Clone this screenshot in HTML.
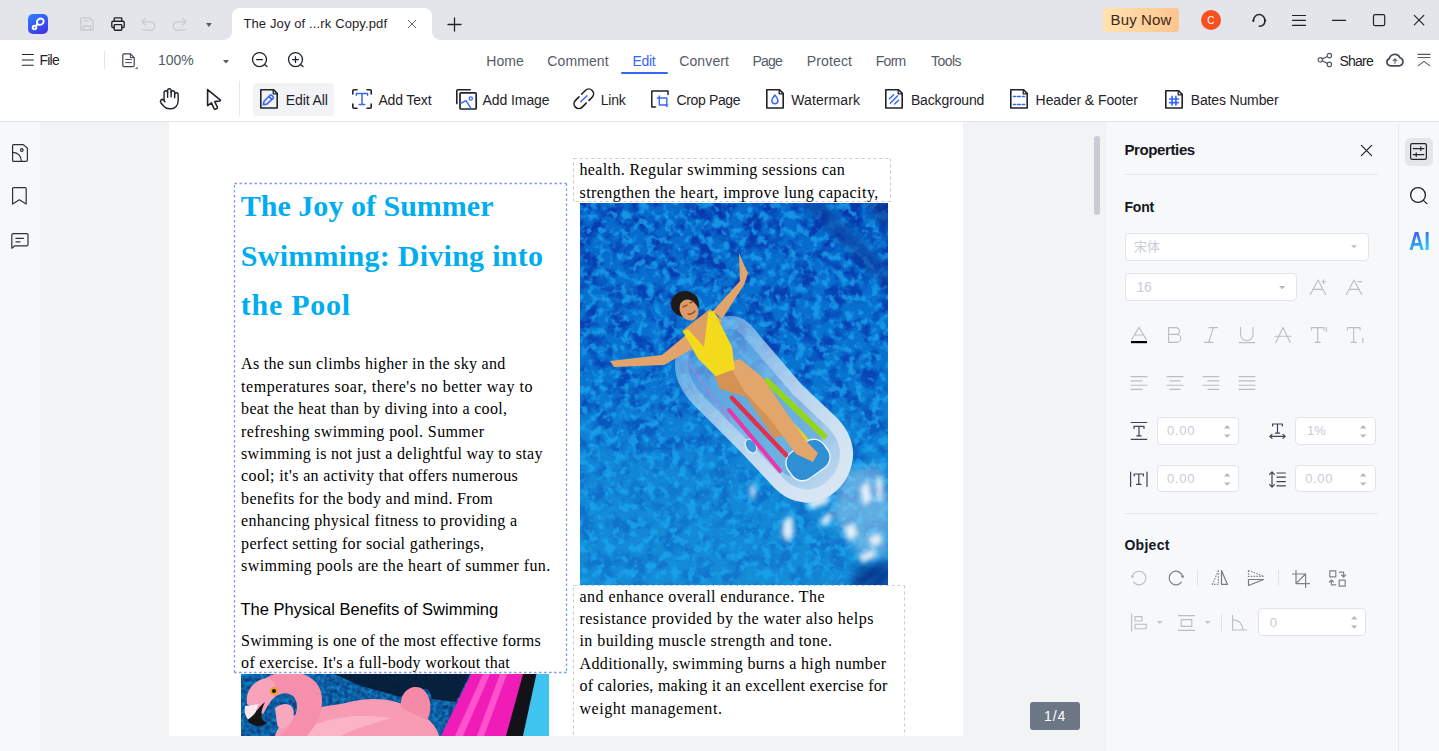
<!DOCTYPE html>
<html lang="en">
<head>
<meta charset="utf-8">
<title>The Joy of Summer Work Copy.pdf</title>
<style>
*{box-sizing:border-box;margin:0;padding:0}
html,body{width:1439px;height:751px;overflow:hidden;background:#f2f3f5}
body{position:relative;font-family:"Liberation Sans","Noto Sans CJK SC",sans-serif;color:#1f2329;font-size:14px}
.t{position:absolute;white-space:pre;line-height:20px;height:20px;z-index:5}
svg{position:absolute;overflow:visible;z-index:4}
.box{position:absolute}
.k{fill:none;stroke:#1f2329;stroke-width:1.4;stroke-linecap:round;stroke-linejoin:round}
.b{fill:none;stroke:#3a66f5;stroke-width:1.4;stroke-linecap:round;stroke-linejoin:round}
.g{fill:none;stroke:#c6c9d0;stroke-width:1.3;stroke-linecap:round;stroke-linejoin:round}
.m{fill:none;stroke:#8a8f99;stroke-width:1.2;stroke-linecap:round;stroke-linejoin:round}
.inp{position:absolute;background:#fff;border:1px solid #e2e4e9;border-radius:4px}
#titlebar{position:absolute;left:0;top:0;width:1439px;height:40px;background:#e4e5eb}
#tab{position:absolute;left:232px;top:8px;width:200px;height:32px;background:#fff;border-radius:8px 8px 0 0}
#menubar{position:absolute;left:0;top:40px;width:1439px;height:40px;background:#fff}
#toolbar{position:absolute;left:0;top:80px;width:1439px;height:42px;background:#fff;border-bottom:1px solid #e3e5e9}
#leftbar{position:absolute;left:0;top:122px;width:41px;height:629px;background:#f7f8fa;border-right:1px solid #eeeff1}
#main{position:absolute;left:40px;top:122px;width:1065px;height:629px;background:#f2f3f5}
#page{position:absolute;left:169px;top:122px;width:794px;height:613.5px;background:#fff;overflow:hidden}
#props{position:absolute;left:1105px;top:122px;width:294px;height:629px;background:#f7f8fa;border-right:1px solid #ecedf0;border-left:1px solid #ecedf0}
#rstrip{position:absolute;left:1399px;top:122px;width:40px;height:629px;background:#f7f8fa}
</style>
</head>
<body>
<div id="titlebar"><div id="tab"></div></div>
<div id="menubar"></div>
<div id="toolbar"></div>
<div id="leftbar"></div>
<div id="main"></div>
<div id="page">
<svg style="left:65px;top:61px" width="333" height="490" viewBox="0 0 333 490"><path d="M.5 .5H332.5M332.5 .5V489.5M332.5 489.5H.5M.5 489.5V.5" fill="none" stroke="#7a96f7" stroke-width="1.3" stroke-dasharray="2.4 2.6"/></svg>
<svg style="left:404px;top:36px" width="318" height="44" viewBox="0 0 318 44"><path d="M.5 .5H317.5M317.5 .5V43.5M317.5 43.5H.5M.5 43.5V.5" fill="none" stroke="#cbcbcb" stroke-width="1" stroke-dasharray="3 3"/></svg>
<svg style="left:404px;top:463px" width="332" height="156" viewBox="0 0 332 156"><path d="M.5 .5H331.5M331.5 .5V155.5M.5 155.5V.5" fill="none" stroke="#cbcbcb" stroke-width="1" stroke-dasharray="3 3"/></svg>
<svg style="left:411px;top:81px" width="308" height="382" viewBox="0 0 308 382">
<defs>
<filter id="w1" color-interpolation-filters="sRGB" x="0" y="0" width="100%" height="100%"><feTurbulence type="fractalNoise" baseFrequency="0.06" numOctaves="3" seed="7"/><feColorMatrix values="0 0 0 0 0.03  0 0 0 0 0.22  0 0 0 0 0.68  4.5 0 0 0 -2"/></filter>
<filter id="w2" color-interpolation-filters="sRGB" x="0" y="0" width="100%" height="100%"><feTurbulence type="fractalNoise" baseFrequency="0.12" numOctaves="3" seed="23"/><feColorMatrix values="0 0 0 0 0.1  0 0 0 0 0.64  0 0 0 0 0.93  0 4.5 0 0 -2.15"/></filter>
<linearGradient id="wg" x1="0" y1="0" x2="0" y2="1"><stop offset="0" stop-color="#0768cc"/><stop offset=".45" stop-color="#0973d0"/><stop offset=".7" stop-color="#1286d6"/><stop offset="1" stop-color="#158cd6"/></linearGradient>
<linearGradient id="mg" x1="0" y1="0" x2="0" y2="1"><stop offset="0" stop-color="#fff" stop-opacity=".75"/><stop offset=".4" stop-color="#fff" stop-opacity=".75"/><stop offset=".75" stop-color="#fff" stop-opacity=".85"/></linearGradient>
<mask id="mk"><rect width="308" height="382" fill="url(#mg)"/></mask>
<linearGradient id="dg" x1="0" y1="0" x2="0" y2="1"><stop offset="0" stop-color="#fff" stop-opacity="1"/><stop offset=".45" stop-color="#fff" stop-opacity=".75"/><stop offset=".7" stop-color="#fff" stop-opacity=".3"/><stop offset="1" stop-color="#fff" stop-opacity=".25"/></linearGradient>
<mask id="dk"><rect width="308" height="382" fill="url(#dg)"/></mask>
<linearGradient id="fl" gradientUnits="userSpaceOnUse" x1="110" y1="130" x2="260" y2="290"><stop offset="0" stop-color="#6eb4ea" stop-opacity=".55"/><stop offset=".5" stop-color="#9ec8ec" stop-opacity=".75"/><stop offset="1" stop-color="#cfe0f0" stop-opacity=".95"/></linearGradient>
<linearGradient id="rg" gradientUnits="userSpaceOnUse" x1="120" y1="140" x2="250" y2="290"><stop offset="0" stop-color="#fff" stop-opacity=".15"/><stop offset=".45" stop-color="#fff" stop-opacity=".55"/><stop offset="1" stop-color="#fff" stop-opacity="1"/></linearGradient>
<mask id="rm"><rect width="308" height="382" fill="url(#rg)"/></mask>
<clipPath id="pc"><rect width="308" height="382"/></clipPath>
<clipPath id="fc2"><path d="M150 113C163 112 172 122 180 133L222 182L258 216C272 232 278 250 268 272C258 292 238 302 222 299C208 297 200 291 190 280L160 248L112 200C100 186 92 170 96 152C102 130 128 113 150 113Z"/></clipPath>
<filter id="bl"><feGaussianBlur stdDeviation="4"/></filter>
<filter id="bs"><feGaussianBlur stdDeviation="2.6"/></filter><filter id="b1"><feGaussianBlur stdDeviation="1"/></filter>
</defs>
<g clip-path="url(#pc)">
<rect width="308" height="382" fill="url(#wg)"/>
<g mask="url(#dk)"><rect width="308" height="382" filter="url(#w1)"/></g>
<g mask="url(#mk)"><rect width="308" height="382" filter="url(#w2)"/></g>
<!-- darker lane lines / corners -->
<g filter="url(#bl)" opacity=".6"><path d="M214 -5L312 92L312 66L240 -5Z" fill="#0a3a9c"/><path d="M280 -5H312V36Z" fill="#0a2f8a"/><path d="M276 364L312 356V388H270Z" fill="#04156e"/></g>
<!-- sun glints -->
<path d="M262 268L300 262L312 300L306 356L276 348L252 312Z" fill="#dbeaf6" opacity=".38" filter="url(#bl)"/>
<g filter="url(#bs)" fill="#f4f8fb" opacity=".9"><path d="M226 300L238 294L250 292L248 300L232 306Z"/><path d="M240 318L250 308L252 316L244 324Z"/><path d="M203 318L212 312L214 330L208 340L202 332Z"/><path d="M264 324L274 320L278 332L268 338Z"/><path d="M280 286L288 276L292 296L284 304Z"/><path d="M296 278L302 272L302 296L298 300Z"/><path d="M288 334L300 330L302 340L292 344Z"/><path d="M278 352L294 346L296 354L282 360Z"/><path d="M170 284L175 280L175 294L171 296Z"/></g>
<!-- float -->
<path d="M150 113C163 112 172 122 180 133L222 182L258 216C272 232 278 250 268 272C258 292 238 302 222 299C208 297 200 291 190 280L160 248L112 200C100 186 92 170 96 152C102 130 128 113 150 113Z" fill="url(#fl)"/>
<g clip-path="url(#fc2)"><g mask="url(#rm)"><path d="M150 113C163 112 172 122 180 133L222 182L258 216C272 232 278 250 268 272C258 292 238 302 222 299C208 297 200 291 190 280L160 248L112 200C100 186 92 170 96 152C102 130 128 113 150 113Z" fill="none" stroke="#d8e6f3" stroke-width="26"/></g>
<path d="M140 150L180 170L236 226L250 252L232 276L206 272L180 246L128 190Z" fill="#5fa9df" opacity=".75"/>
</g>
<rect x="206" y="241" width="44" height="32" rx="13" transform="rotate(-36 228 257)" fill="#2f8fd4" stroke="#f0f6fc" stroke-width="1.3"/>
<ellipse cx="171" cy="243" rx="5" ry="7.5" transform="rotate(-30 171 243)" fill="#3c98da" stroke="#e6f0fa" stroke-width="1.2"/>
<path d="M108 160L150 218" stroke="#a080e0" stroke-width="3" stroke-linecap="round" opacity=".5"/>
<path d="M149 207L200 268" stroke="#e838a8" stroke-width="4" stroke-linecap="round"/>
<path d="M152 195L206 252" stroke="#e0304c" stroke-width="4.5" stroke-linecap="round"/>
<path d="M187 178L244 233" stroke="#92d420" stroke-width="6" stroke-linecap="round"/>
<path d="M213 222L226 236" stroke="#ecd420" stroke-width="4" stroke-linecap="round"/>
<!-- legs -->
<path d="M134 172L150 163L178 174L186 190L200 222L206 232L194 235L180 214L166 194L140 186Z" fill="#d49254"/>
<path d="M148 160L160 156L182 174L226 238L238 250L233 259L216 251L190 216L164 188Z" fill="#e3a66a"/>
<!-- arms -->
<path d="M133 108L160 78L159 50L165 64L168 70L164 82L142 116Z" fill="#e2a46a"/>
<path d="M106 132L82 152L30 158L34 164L84 162L112 146Z" fill="#e2a46a"/>
<!-- torso / neck skin -->
<path d="M102 128L130 106L142 118L124 144Z" fill="#dd9e63"/>
<!-- swimsuit -->
<path d="M102.8 128.6L108 126L124 144L128.3 108.7L134 108L143 126L152 144L154.7 166L135.7 173.2L118 155.6Z" fill="#f3da1d"/>
<!-- head -->
<ellipse cx="105" cy="101" rx="14" ry="13" fill="#1d1a1c"/>
<ellipse cx="109" cy="107" rx="9" ry="11" transform="rotate(-28 109 107)" fill="#dc9a66"/>
<path d="M103 104L107 102M110 100L114 98M108 111Q112 112 115 108" stroke="#7a3b2a" stroke-width="1.2" fill="none" stroke-linecap="round"/>
</g></svg>
<svg style="left:72px;top:551.7px" width="308" height="62" viewBox="0 0 308 62">
<defs><clipPath id="fc"><rect width="308" height="62"/></clipPath>
<filter id="w3" color-interpolation-filters="sRGB" x="0" y="0" width="100%" height="100%"><feTurbulence type="fractalNoise" baseFrequency="0.25" numOctaves="2" seed="5"/><feColorMatrix values="0 0 0 0 0.05  0.5 0 0 0 0.12  0.55 0 0 0 0.36  0 0 0 0 1"/></filter></defs>
<g clip-path="url(#fc)">
<rect width="308" height="62" fill="#155f9e"/>
<rect width="308" height="62" filter="url(#w3)"/>
<path d="M93 0H229L215 28L191 25L188 16L173 13L160 23L120 12Z" fill="#071b34" opacity=".92"/>
<!-- magenta mat -->
<path d="M230 0H283L266 62H200Z" fill="#f01cb8"/>
<path d="M242 0H249L222 62H214ZM259 0H266L243 62H236Z" fill="#ff62d2" opacity=".8"/>
<path d="M282 0H295.500L282 62H265Z" fill="#121218"/>
<path d="M295.500 0H308V62H282Z" fill="#3fc4f0"/>
<!-- flamingo body -->
<path d="M34 62C40 40 70 34 100 30C130 22 150 24 170 34C186 42 196 52 198 62Z" fill="#f79cb4"/>
<path d="M60 62C70 46 110 38 150 44C130 50 110 56 100 62Z" fill="#fbb9c9" opacity=".8"/>
<path d="M160 34C158 18 170 10 180 14C190 20 192 36 186 46Z" fill="#f58aa6"/>
<!-- neck arch -->
<path d="M22 6C40 -8 74 -4 80 18C84 36 76 50 66 62H40C56 46 60 30 52 22C44 16 34 20 28 30Z" fill="#f58fab"/>
<!-- head / beak -->
<path d="M6 30C4 18 12 6 26 4C36 6 38 18 30 26L22 40Z" fill="#f7a3b9"/>
<path d="M4 32C2 42 8 50 20 52C14 44 14 36 18 30Z" fill="#fbe9ee"/>
<path d="M6 46C12 54 22 54 26 48C20 48 18 40 24 28C16 34 14 42 6 46Z" fill="#151316"/>
<circle cx="33" cy="17" r="4" fill="#e8a21c"/><circle cx="33" cy="17" r="2" fill="#1a1410"/>
<path d="M34 34C44 26 56 30 52 44C46 56 38 58 36 50Z" fill="#f7a8bd"/>
</g></svg>
</div>
<div id="props"></div>
<div id="rstrip"></div>
<svg style="left:28px;top:14px" width="20" height="20" viewBox="0 0 20 20"><defs><linearGradient id="lg" x1="0" y1="0" x2="0.6" y2="1"><stop offset="0" stop-color="#2b83ff"/><stop offset="1" stop-color="#4038e6"/></linearGradient></defs><rect width="20" height="20" rx="5" fill="url(#lg)"/><g fill="none" stroke="#fff" stroke-width="1.9" stroke-linecap="round"><ellipse cx="12.3" cy="7.7" rx="3.5" ry="3" transform="rotate(-30 12.3 7.7)"/><circle cx="6.5" cy="13.6" r="1.8"/><path d="M9.5 9.8Q8.5 11 7.9 12.3"/></g></svg>
<svg style="left:80px;top:17px" width="14" height="14" viewBox="0 0 14 14" ><path class="g" d="M1.5 .8H9.5L13.2 4.5V13.2H.8V1.5Q.8 .8 1.5 .8Z"/><path class="g" d="M3.5 13V9H10.5V13M4 3.8H8"/></svg>
<svg style="left:111px;top:17px" width="14" height="14" viewBox="0 0 14 14" ><path class="k" style="stroke-width:1.35" d="M3.2 4.2V1.6Q3.2 .8 4 .8H10Q10.8 .8 10.8 1.6V4.2M3.2 10.5H2Q.8 10.5 .8 9.3V5.4Q.8 4.2 2 4.2H12Q13.2 4.2 13.2 5.4V9.3Q13.2 10.5 12 10.5H10.8"/><rect class="k" style="stroke-width:1.35" x="3.2" y="7.6" width="7.6" height="5.6" rx=".8"/></svg>
<svg style="left:141px;top:17px" width="15" height="14" viewBox="0 0 15 14" ><path class="g" d="M4.5 1.5L1 4.8L4.5 8M1.2 4.8H9.5A4.2 4.2 0 0 1 9.5 13.2H2"/></svg>
<svg style="left:172px;top:17px" width="15" height="14" viewBox="0 0 15 14" ><path class="g" d="M10.5 1.5L14 4.8L10.5 8M13.8 4.8H5.5A4.2 4.2 0 0 0 5.5 13.2H13"/></svg>
<svg style="left:206px;top:22.8px" width="6" height="4" viewBox="0 0 6 4" ><path d="M0 0H5.8L2.9 4Z" fill="#555b66"/></svg>
<div class="box" style="left:224px;top:32px;width:8px;height:8px;background:radial-gradient(circle at 0 0,transparent 7.5px,#fff 8px)"></div>
<div class="box" style="left:432px;top:32px;width:8px;height:8px;background:radial-gradient(circle at 100% 0,transparent 7.5px,#fff 8px)"></div>
<svg style="left:408px;top:20px" width="8" height="8" viewBox="0 0 8 8" ><path class="k" style="stroke-width:.9;stroke:#4a4f59" d="M.2 .2L7.8 7.8M7.8 .2L.2 7.8"/></svg>
<svg style="left:448px;top:17.5px" width="13" height="13" viewBox="0 0 13 13" ><path class="k" style="stroke-width:1.3" d="M6.5 0V13M0 6.5H13"/></svg>
<div class="box" style="left:1103px;top:8px;width:76px;height:24px;border-radius:4px;background:linear-gradient(90deg,#ffe3b1,#ffc48e)"></div>
<div class="box" style="left:1200.8px;top:9.8px;width:20.4px;height:20.4px;border-radius:50%;background:#f4511e"></div>
<svg style="left:1251px;top:13px" width="16" height="15" viewBox="0 0 16 15" ><path class="k" style="stroke-width:1.5" d="M2.6 8.2V7.2A5.6 5.6 0 0 1 13.8 7.2V8.4Q13.8 12.6 8.4 13.3"/><path d="M2.9 5.6L.9 7.6L2.9 9.6ZM13.5 5.6L15.5 7.6L13.5 9.6Z" fill="#1f2329"/></svg>
<svg style="left:1292px;top:15px" width="14" height="11" viewBox="0 0 14 11" ><path class="k" style="stroke-width:1.2" d="M.5 .5H13.5M.5 5.3H13.5M.5 10.4H13.5"/></svg>
<svg style="left:1332px;top:20px" width="14" height="1" viewBox="0 0 14 1" ><path class="k" style="stroke-width:1.2" d="M.5 .3H13.7"/></svg>
<svg style="left:1373px;top:14px" width="12" height="12" viewBox="0 0 12 12" ><rect class="k" style="stroke-width:1.2" x=".5" y=".6" width="11.2" height="11" rx="1.6"/></svg>
<svg style="left:1414px;top:15px" width="10" height="10" viewBox="0 0 10 10" ><path class="k" style="stroke-width:1.2" d="M.3 .3L9.8 9.8M9.8 .3L.3 9.8"/></svg>
<svg style="left:22px;top:54px" width="12" height="12" viewBox="0 0 12 12" ><path class="k" style="stroke-width:1.05" d="M.3 .4H11.3M.3 5.9H11.3M.3 11.2H11.3"/></svg>
<div class="box" style="left:104px;top:51px;width:1px;height:18px;background:#e2e4e8"></div>
<svg style="left:121.5px;top:53px" width="16" height="17" viewBox="0 0 16 17" ><path class="k" style="stroke-width:1.2;stroke:#3d434e" d="M.8 2Q.8 .8 2 .8H8.4L12.2 4.6V12.4Q12.2 13.6 11 13.6H2Q.8 13.6 .8 12.4Z"/><path class="k" style="stroke-width:1;stroke:#3d434e" d="M3.6 6.4H9.4M3.6 9.6H9.4M8.4 1V4.6H12"/><path d="M15.6 13.4V16H13Z" fill="#555b66"/></svg>
<svg style="left:223px;top:60px" width="6" height="4" viewBox="0 0 6 4" ><path d="M0 0H6L3 3.6Z" fill="#555b66"/></svg>
<svg style="left:251px;top:52px" width="18" height="16" viewBox="0 0 18 16" ><circle class="k" style="stroke-width:1.3" cx="8.5" cy="7.6" r="7"/><path class="k" style="stroke-width:1.3" d="M5.6 7.6H11.4M13.6 12.6L16 14.6"/></svg>
<svg style="left:287px;top:52px" width="18" height="16" viewBox="0 0 18 16" ><circle class="k" style="stroke-width:1.3" cx="8.5" cy="7.6" r="7"/><path class="k" style="stroke-width:1.3" d="M5.6 7.6H11.4M8.5 4.7V10.5M13.6 12.6L16 14.6"/></svg>
<div class="box" style="left:621px;top:72px;width:47px;height:2px;background:#3a66f5;border-radius:1px"></div>
<svg style="left:1317px;top:53px" width="15" height="14" viewBox="0 0 15 14" ><g class="k" style="stroke:#555b66;stroke-width:1.2"><circle cx="3.3" cy="6.8" r="2.2"/><circle cx="12.4" cy="2.6" r="2.2"/><circle cx="12.4" cy="11.4" r="2.2"/><path d="M5.3 5.9L10.4 3.5M5.3 7.8L10.4 10.4"/></g></svg>
<svg style="left:1386px;top:53px" width="18" height="14" viewBox="0 0 18 14" ><path class="k" style="stroke:#454c5a;stroke-width:1.7" d="M4.6 12.8A3.7 3.7 0 0 1 3.4 5.6A5.6 5.6 0 0 1 14 4.8A4.1 4.1 0 0 1 13.4 12.8Z"/><path class="k" style="stroke:#555b66;stroke-width:1.1" d="M9 10.2V6M7.2 7.7L9 5.9L10.8 7.7"/></svg>
<svg style="left:1418px;top:54px" width="12" height="12" viewBox="0 0 12 12" ><path class="k" style="stroke:#555b66;stroke-width:1.1" d="M0 .4H12M0 3.5H12M.3 11.6L6 7.4L11.7 11.6"/></svg>
<svg style="left:160px;top:88px" width="19" height="21" viewBox="0 0 19 21" ><g class="k" style="stroke-width:1.6" transform="translate(-1.2,-1.2) scale(.88,1)"><path d="M18 11V6a2 2 0 0 0-2-2a2 2 0 0 0-2 2"/><path d="M14 10V4a2 2 0 0 0-2-2a2 2 0 0 0-2 2v2"/><path d="M10 10.5V6a2 2 0 0 0-2-2a2 2 0 0 0-2 2v8"/><path d="M18 8a2 2 0 1 1 4 0v6a8 8 0 0 1-8 8h-2c-2.8 0-4.5-.860-5.99-2.34l-3.6-3.6a2 2 0 0 1 2.83-2.82L7 15"/></g></svg>
<svg style="left:206px;top:88px" width="16" height="23" viewBox="0 0 16 23" ><path class="k" style="stroke-width:1.6" d="M1.6 1.6V17.6L5.4 14.8L8.1 20.6Q8.6 21.6 9.6 21.1L10.9 20.5Q11.8 20 11.3 19L8.7 13.6L13.8 13Q14.9 12.7 14.1 11.9Z"/></svg>
<div class="box" style="left:239px;top:81px;width:1px;height:35px;background:#e6e7eb"></div>
<div class="box" style="left:253px;top:83px;width:81px;height:33px;background:#f2f3f5;border-radius:4px"></div>
<svg style="left:260px;top:89px" width="18" height="20" viewBox="0 0 18 20" ><path class="k" style="stroke-width:1.6" d="M.8 0.8H13.6L17.2 4.4V19H.8Z"/><path class="k" style="stroke-width:1.3" d="M13.2 1.0V4.8H17"/><path class="b" style="stroke-width:1.6" d="M3.3 15.7L4.1 12.2L10 6.3Q10.8 5.5 11.6 6.3L13.1 7.8Q13.9 8.6 13.1 9.4L6.8 15.1ZM9 7.6L11.8 10.4"/></svg>
<svg style="left:352px;top:89px" width="20" height="20" viewBox="0 0 20 20" ><path class="k" style="stroke-width:1.6" d="M.8 5V2Q.8 .8 2 .8H5M15 .8H18Q19.2 .8 19.2 2V5M19.2 15V18Q19.2 19.2 18 19.2H15M5 19.2H2Q.8 19.2 .8 18V15"/><path class="b" style="stroke-width:1.5" d="M4.4 6.2V4.6H15.6V6.2M10 4.6V15.4M7.2 15.6H12.8"/></svg>
<svg style="left:456px;top:89px" width="21" height="21" viewBox="0 0 21 21" ><path class="k" style="stroke-width:1.6" d="M.8 14.6V2Q.8 .8 2 .8H14.2"/><rect class="k" style="stroke-width:1.7" x="4" y="3.8" width="16.2" height="16.2" rx="1"/><path class="b" style="stroke-width:1.4" d="M4.6 14.4L10 11.6L14.8 19.2"/><circle class="b" style="stroke-width:1.3" cx="14.8" cy="9.5" r="1.6"/></svg>
<svg style="left:573px;top:88px" width="22" height="22" viewBox="0 0 22 22" ><g transform="translate(10.8,10.8) rotate(-45)"><path class="k" style="stroke-width:1.6" d="M1.6 -4.8H7A4.8 4.8 0 0 1 7 4.8H2.6M-2 -4.8H-7A4.8 4.8 0 0 0 -7 4.8H-1.4"/><path class="b" style="stroke-width:1.5" d="M-4.2 0H4.4"/></g></svg>
<svg style="left:651px;top:90px" width="18" height="18" viewBox="0 0 18 18" ><path class="k" style="stroke-width:1.5" d="M4.5 16.9H.8V1H17V4.6"/><path class="b" style="stroke-width:1.4" d="M8.3 6V15H16M6.4 8H15.8V16"/><path d="M15.8 17.6L14 15H17.6ZM17.6 15L15 13.2V16.8Z" fill="#3a66f5"/></svg>
<svg style="left:766px;top:89px" width="18" height="20" viewBox="0 0 18 20" ><path class="k" style="stroke-width:1.6" d="M.8 0.8H13.6L17.2 4.4V19H.8Z"/><path class="k" style="stroke-width:1.3" d="M13.2 1.0V4.8H17"/><path class="b" style="stroke-width:1.5" d="M8.9 6Q11.9 9.8 11.9 11.7A3 3 0 0 1 5.9 11.7Q5.9 9.8 8.9 6Z"/></svg>
<svg style="left:885px;top:89px" width="18" height="20" viewBox="0 0 18 20" ><path class="k" style="stroke-width:1.6" d="M.8 0.8H13.6L17.2 4.4V19H.8Z"/><path class="k" style="stroke-width:1.3" d="M13.2 1.0V4.8H17"/><path class="b" style="stroke-width:1.5" d="M4.4 9.8L8.6 5.8M5.3 14.2L12.6 6.8M9.6 15L13.6 11.2"/></svg>
<svg style="left:1010px;top:89px" width="18" height="20" viewBox="0 0 18 20" ><path class="k" style="stroke-width:1.6" d="M.8 0.8H13.6L17.2 4.4V19H.8Z"/><path class="k" style="stroke-width:1.3" d="M13.2 1.0V4.8H17"/><path class="b" style="stroke-width:1.5" d="M3.4 7.5H5.5M7.4 7.5H10.5M12.4 7.5H14.6M3.4 15.5H5.5M7.4 15.5H10.5M12.4 15.5H14.6"/></svg>
<svg style="left:1165px;top:89px" width="18" height="20" viewBox="0 0 18 20" ><path class="k" style="stroke-width:1.6" d="M.8 1.8H13.6L17.2 5.4V19H.8Z"/><path class="k" style="stroke-width:1.3" d="M13.2 2.0V5.8H17"/><path class="b" style="stroke-width:1.7" d="M4.6 10H13.4M4.6 13.6H13.4M7.1 7.4V16M10.9 7.4V16"/></svg>
<svg style="left:12px;top:144px" width="16" height="18" viewBox="0 0 16 18" ><path class="k" style="stroke-width:1.2;stroke:#2b303a" d="M1.6 .6H11.4L15.4 4.2V16Q15.4 17.4 14 17.4H1.6Q.6 17.4 .6 16V1.6Q.6 .6 1.6 .6Z"/><circle class="k" style="stroke-width:1.2;stroke:#2b303a" cx="9.8" cy="6" r="1.3"/><path class="k" style="stroke-width:1.2;stroke:#2b303a" d="M.8 8.4Q9 9 9.4 17.2"/></svg>
<svg style="left:12px;top:187px" width="15" height="18" viewBox="0 0 15 18" ><path class="k" style="stroke-width:1.2;stroke:#2b303a" d="M1.6 .6H13.2Q14.2 .6 14.2 1.6V17L7.4 12.8L.6 17V1.6Q.6 .6 1.6 .6Z"/></svg>
<svg style="left:11px;top:233px" width="18" height="16" viewBox="0 0 18 16" ><path class="k" style="stroke-width:1.2;stroke:#2b303a" d="M2.4 .6H15.6Q17 .6 17 2V11.4Q17 12.8 15.6 12.8H4L.8 15.2V2Q.8 .6 2.4 .6Z"/><path class="k" style="stroke-width:1.2;stroke:#2b303a" d="M5 5.4H12.4M5 8.8H9"/></svg>
<div class="box" style="left:1094px;top:135.5px;width:6px;height:79px;background:#c9ccd3;border-radius:3px"></div>
<div class="box" style="left:1030px;top:702px;width:50px;height:28px;background:#6c7684;border-radius:3px"></div>
<div class="box" style="left:1405px;top:138px;width:28px;height:28px;background:#e4e6ea;border-radius:5px"></div>
<svg style="left:1410px;top:143px" width="17" height="17" viewBox="0 0 17 17" ><rect class="k" style="stroke-width:1.2" x=".6" y=".6" width="15.8" height="15.8" rx="1.6"/><path class="k" style="stroke-width:1.2" d="M3.2 5.6H13.8M3.2 11.6H13.8M10.8 3.8V7.4M6.2 9.8V13.4"/></svg>
<svg style="left:1410px;top:187px" width="18" height="18" viewBox="0 0 18 18" ><circle class="k" style="stroke-width:1.3" cx="8" cy="8" r="7.4"/><path class="k" style="stroke-width:1.3" d="M13.4 13.4L16.8 16.6"/></svg>
<div class="t" style="left:1409px;top:227px;height:28px;line-height:28px;font-size:25px;font-weight:700;transform:scaleX(.84);transform-origin:0 0;background:linear-gradient(160deg,#3f63f6 25%,#23d0f0 80%);-webkit-background-clip:text;background-clip:text;color:transparent">AI</div>
<svg style="left:1360.5px;top:144.5px" width="11" height="11" viewBox="0 0 11 11" ><path class="k" style="stroke-width:1.2" d="M.4 .4L10.6 10.6M10.6 .4L.4 10.6"/></svg>
<div class="box" style="left:1125px;top:174px;width:253px;height:1px;background:#e4e6ea"></div>
<div class="inp" style="left:1125px;top:233px;width:244px;height:28px"></div>
<svg style="left:1351px;top:245.2px" width="6" height="4" viewBox="0 0 6 4" ><path d="M0 0H6L3 3.4Z" fill="#c3c7cf"/></svg>
<div class="inp" style="left:1125px;top:273px;width:172px;height:28px"></div>
<svg style="left:1278.6px;top:286.3px" width="7" height="4" viewBox="0 0 7 4" ><path d="M0 0H6.4L3.2 3.2Z" fill="#b4b8c0"/></svg>
<svg style="left:1310px;top:279px" width="17" height="16" viewBox="0 0 17 16" ><path class="g" style="stroke:#b9bdc6;stroke-width:1.1" d="M.4 15.6L8 1L15.6 15.6M3.4 10.4H12.6M11.6 2.8H15.6M13.6 .8V4.8"/></svg>
<svg style="left:1346px;top:279px" width="17" height="16" viewBox="0 0 17 16" ><path class="g" style="stroke:#b9bdc6;stroke-width:1.1" d="M.4 15.6L8 1L15.6 15.6M3.4 10.4H12.6M11.8 2.6H15.8"/></svg>
<svg style="left:1131px;top:327px" width="16" height="17" viewBox="0 0 16 17" ><path class="g" style="stroke:#b9bdc6;stroke-width:1.1" d="M.8 12.4L8 .4L15.2 12.4M3.6 8H12.4"/><rect x="0" y="14" width="16" height="2.2" fill="#000"/></svg>
<svg style="left:1168px;top:327px" width="14" height="16" viewBox="0 0 14 16" ><path class="g" style="stroke:#b9bdc6;stroke-width:1.1" d="M.6 .6V15.4H8.8A4 4 0 0 0 8.8 7.4H.6M8 7.4A3.4 3.4 0 0 0 8 .6H.6"/></svg>
<svg style="left:1204px;top:327px" width="14" height="16" viewBox="0 0 14 16" ><path class="g" style="stroke:#b9bdc6;stroke-width:1.1" d="M5 .6H13.4M.6 15.4H9M9.4 .6L4.6 15.4"/></svg>
<svg style="left:1239px;top:327px" width="16" height="16" viewBox="0 0 16 16" ><path class="g" style="stroke:#b9bdc6;stroke-width:1.1" d="M1.6 .4V7.6A6.2 6.2 0 0 0 14 7.6V.4M.2 15.6H15.6"/></svg>
<svg style="left:1275px;top:327px" width="16" height="16" viewBox="0 0 16 16" ><path class="g" style="stroke:#b9bdc6;stroke-width:1.1" d="M.8 15.4L8 .4L15.2 15.4M0 9.2H16"/></svg>
<svg style="left:1311px;top:327px" width="17" height="16" viewBox="0 0 17 16" ><path class="g" style="stroke:#b9bdc6;stroke-width:1.1" d="M.4 3V.6H13V3M6.7 .6V15.4M4 15.4H9.4M15.4 .4V4.4"/></svg>
<svg style="left:1346.5px;top:327px" width="17" height="16" viewBox="0 0 17 16" ><path class="g" style="stroke:#b9bdc6;stroke-width:1.1" d="M.4 3V.6H13V3M6.7 .6V15.4M4 15.4H9.4M15.8 11.4V15.8"/></svg>
<svg style="left:1131px;top:376px" width="16" height="14" viewBox="0 0 16 14" ><path class="g" style="stroke:#b9bdc6;stroke-width:1.1" d="M0 .6H16M0 4.9H11M0 9.2H16M0 13.4H11"/></svg>
<svg style="left:1167px;top:376px" width="16" height="14" viewBox="0 0 16 14" ><path class="g" style="stroke:#b9bdc6;stroke-width:1.1" d="M0 .6H16M3 4.9H13M0 9.2H16M3 13.4H13"/></svg>
<svg style="left:1203px;top:376px" width="16" height="14" viewBox="0 0 16 14" ><path class="g" style="stroke:#b9bdc6;stroke-width:1.1" d="M0 .6H16M5 4.9H16M0 9.2H16M5 13.4H16"/></svg>
<svg style="left:1239px;top:376px" width="16" height="14" viewBox="0 0 16 14" ><path class="g" style="stroke:#b9bdc6;stroke-width:1.1" d="M0 .6H16M0 4.9H16M0 9.2H16M0 13.4H16"/></svg>
<div class="inp" style="left:1157.4px;top:417.4px;width:82px;height:27.2px"></div>
<svg style="left:1223.9px;top:424.79999999999995px" width="7" height="13" viewBox="0 0 7 13" ><path d="M0 3.4L3.2 0L6.4 3.4ZM0 9.4L3.2 12.8L6.4 9.4Z" fill="#b4b8c0"/></svg>
<div class="inp" style="left:1295px;top:417.4px;width:80.6px;height:27.2px"></div>
<svg style="left:1360.1px;top:424.79999999999995px" width="7" height="13" viewBox="0 0 7 13" ><path d="M0 3.4L3.2 0L6.4 3.4ZM0 9.4L3.2 12.8L6.4 9.4Z" fill="#b4b8c0"/></svg>
<div class="inp" style="left:1157.4px;top:465.3px;width:82px;height:27.2px"></div>
<svg style="left:1223.9px;top:472.7px" width="7" height="13" viewBox="0 0 7 13" ><path d="M0 3.4L3.2 0L6.4 3.4ZM0 9.4L3.2 12.8L6.4 9.4Z" fill="#b4b8c0"/></svg>
<div class="inp" style="left:1295px;top:465.3px;width:80.6px;height:27.2px"></div>
<svg style="left:1360.1px;top:472.7px" width="7" height="13" viewBox="0 0 7 13" ><path d="M0 3.4L3.2 0L6.4 3.4ZM0 9.4L3.2 12.8L6.4 9.4Z" fill="#b4b8c0"/></svg>
<div class="inp" style="left:1258.4px;top:608.4px;width:108px;height:27.2px"></div>
<svg style="left:1350.9px;top:615.8px" width="7" height="13" viewBox="0 0 7 13" ><path d="M0 3.4L3.2 0L6.4 3.4ZM0 9.4L3.2 12.8L6.4 9.4Z" fill="#b4b8c0"/></svg>
<svg style="left:1131px;top:422px" width="16" height="18" viewBox="0 0 16 18" ><path class="k" style="stroke:#3d4350;stroke-width:1.2" d="M.2 .5H15.8M.2 17.3H15.8M3 6.4V4.4H13V6.4M8 4.4V13.6M5.8 13.8H10.2"/></svg>
<svg style="left:1269px;top:423px" width="17" height="16" viewBox="0 0 17 16" ><path class="k" style="stroke:#3d4350;stroke-width:1.2" d="M3.6 3V1H13.4V3M8.5 1V10M6.4 10.2H10.6M1 13.4H16M3 11.4L.8 13.4L3 15.4M14 11.4L16.2 13.4L14 15.4"/></svg>
<svg style="left:1130px;top:471.5px" width="18" height="15" viewBox="0 0 18 15" ><path class="k" style="stroke:#3d4350;stroke-width:1.2" d="M.6 0V14.4M17 0V14.4M4.2 4V2H13.4V4M8.8 2V12.2M6.6 12.4H11"/></svg>
<svg style="left:1269px;top:470.5px" width="17" height="17" viewBox="0 0 17 17" ><path class="k" style="stroke:#3d4350;stroke-width:1.2" d="M3 1V16M.6 3.4L3 .8L5.4 3.4M.6 13.6L3 16.2L5.4 13.6M8 2H16.4M8 6.2H16.4M8 10.6H16.4M8 14.8H16.4"/></svg>
<div class="box" style="left:1125px;top:513px;width:253px;height:1px;background:#e4e6ea"></div>
<svg style="left:1131px;top:570px" width="16" height="16" viewBox="0 0 16 16" ><path class="g" style="stroke:#b9bdc6;stroke-width:1.1" d="M1.4 6.4A6.8 6.8 0 1 1 2.600 12.200"/><path d="M3.2 6L-.3 5.600L1.1 8.400Z" fill="#b9bdc6"/></svg>
<svg style="left:1167.5px;top:570px" width="16" height="16" viewBox="0 0 16 16" ><path class="m" style="stroke:#7d828c;stroke-width:1.2" d="M14.6 6.4A6.8 6.8 0 1 0 13.400 12.200"/><path d="M12.8 6L16.300 5.600L14.900 8.400Z" fill="#7d828c"/></svg>
<div class="box" style="left:1197px;top:570px;width:1px;height:16px;background:#dfe1e6"></div>
<svg style="left:1212px;top:570px" width="16" height="15" viewBox="0 0 16 15" ><path fill="none" stroke="#777c86" stroke-width="1.1" stroke-dasharray="1.5 1.3" d="M6.4 .4L.4 14.4H6.4Z"/><path fill="none" stroke="#777c86" stroke-width="1.2" stroke-linejoin="round" d="M9.5 .6V14.4H15.5Z"/></svg>
<svg style="left:1248px;top:570px" width="16" height="16" viewBox="0 0 16 16" ><path fill="none" stroke="#777c86" stroke-width="1.1" stroke-dasharray="1.5 1.3" d="M.4 .4V6.4H15.8Z"/><path fill="none" stroke="#777c86" stroke-width="1.2" stroke-linejoin="round" d="M.5 9.5H15.6L.5 15.5Z"/></svg>
<div class="box" style="left:1278px;top:570px;width:1px;height:16px;background:#dfe1e6"></div>
<svg style="left:1292px;top:569.5px" width="18" height="18" viewBox="0 0 18 18" ><path class="m" style="stroke:#7d828c;stroke-width:1.2" d="M4 .4V13.6H17.4M.4 4H13.6V17.4M13.6 4L4.4 13.2"/></svg>
<svg style="left:1329px;top:570px" width="17" height="17" viewBox="0 0 17 17" ><path class="m" style="stroke:#7d828c;stroke-width:1.2" d="M.8 .8H6.8V6.8H.8ZM10.2 10.2H16.2V16.2H10.2ZM10.2 2.2H14.6V7M12.6 5L14.6 7.2L16.6 5M6.8 14.8H2.4V10M.4 12L2.4 9.8L4.4 12"/></svg>
<svg style="left:1131px;top:614px" width="16" height="17" viewBox="0 0 16 17" ><path class="g" style="stroke:#b9bdc6;stroke-width:1.1" d="M.6 0V17M4 2.6H11V7H4ZM4 10.2H15.2V14.8H4Z"/></svg>
<svg style="left:1156.5px;top:621.3px" width="6" height="4" viewBox="0 0 6 4" ><path d="M0 0H5.6L2.8 3.2Z" fill="#c3c7cf"/></svg>
<svg style="left:1178px;top:614.5px" width="17" height="16" viewBox="0 0 17 16" ><path class="g" style="stroke:#b9bdc6;stroke-width:1.1" d="M.4 .6H16.6M.4 15.4H16.6M3.2 4.6H13.8V11.4H3.2Z"/></svg>
<svg style="left:1204.5px;top:621.3px" width="6" height="4" viewBox="0 0 6 4" ><path d="M0 0H5.6L2.8 3.2Z" fill="#c3c7cf"/></svg>
<div class="box" style="left:1221px;top:614px;width:1px;height:17px;background:#dfe1e6"></div>
<svg style="left:1231px;top:614.5px" width="16" height="16" viewBox="0 0 16 16" ><path class="g" style="stroke:#b9bdc6;stroke-width:1.1" style="stroke:#9a9fa9;stroke-width:1.1" d="M1.6 .4V15H15.6M1.6 4.6Q11.2 5.2 12 15"/></svg>
<div class="t" style="left:243.4px;top:14.4px;font-size:13px;color:#1f2329;letter-spacing:0.127px">The Joy of ...rk Copy.pdf</div>
<div class="t" style="left:1110.5px;top:10.1px;font-size:15px;color:#3b2a18;letter-spacing:0.145px">Buy Now</div>
<div class="t" style="left:1207.3px;top:10.5px;font-size:10px;color:#fff">C</div>
<div class="t" style="left:39.5px;top:50.4px;font-size:14px;color:#1f2329;letter-spacing:-0.787px">File</div>
<div class="t" style="left:158.0px;top:50.4px;font-size:14px;color:#555b66">100%</div>
<div class="t" style="left:486.2px;top:50.6px;font-size:14px;color:#555b66;letter-spacing:0.114px">Home</div>
<div class="t" style="left:547.3px;top:50.6px;font-size:14px;color:#555b66;letter-spacing:0.102px">Comment</div>
<div class="t" style="left:679.2px;top:50.6px;font-size:14px;color:#555b66;letter-spacing:0.128px">Convert</div>
<div class="t" style="left:752.5px;top:50.6px;font-size:14px;color:#555b66;letter-spacing:-0.801px">Page</div>
<div class="t" style="left:806.7px;top:50.6px;font-size:14px;color:#555b66;letter-spacing:0.157px">Protect</div>
<div class="t" style="left:875.7px;top:50.6px;font-size:14px;color:#555b66;letter-spacing:-0.691px">Form</div>
<div class="t" style="left:931.0px;top:50.6px;font-size:14px;color:#555b66;letter-spacing:-0.522px">Tools</div>
<div class="t" style="left:632.6px;top:50.6px;font-size:14px;color:#3a66f5;letter-spacing:-0.375px">Edit</div>
<div class="t" style="left:1339.5px;top:50.6px;font-size:14px;color:#1f2329;letter-spacing:-0.765px">Share</div>
<div class="t" style="left:285.8px;top:89.9px;font-size:14px;color:#1f2329;letter-spacing:-0.088px">Edit All</div>
<div class="t" style="left:378.4px;top:89.9px;font-size:14px;color:#1f2329;letter-spacing:-0.148px">Add Text</div>
<div class="t" style="left:482.5px;top:89.9px;font-size:14px;color:#1f2329;letter-spacing:-0.077px">Add Image</div>
<div class="t" style="left:600.8px;top:89.9px;font-size:14px;color:#1f2329;letter-spacing:-0.229px">Link</div>
<div class="t" style="left:676.4px;top:89.9px;font-size:14px;color:#1f2329;letter-spacing:-0.342px">Crop Page</div>
<div class="t" style="left:791.3px;top:89.9px;font-size:14px;color:#1f2329;letter-spacing:0.095px">Watermark</div>
<div class="t" style="left:910.9px;top:89.9px;font-size:14px;color:#1f2329;letter-spacing:-0.135px">Background</div>
<div class="t" style="left:1035.6px;top:89.9px;font-size:14px;color:#1f2329;letter-spacing:-0.079px">Header &amp; Footer</div>
<div class="t" style="left:1190.7px;top:89.9px;font-size:14px;color:#1f2329;letter-spacing:-0.144px">Bates Number</div>
<div class="t" style="left:1124.4px;top:140.2px;font-size:15px;color:#14171c;letter-spacing:-0.378px;font-weight:700">Properties</div>
<div class="t" style="left:1124.4px;top:196.5px;font-size:14px;color:#14171c;letter-spacing:-0.176px;font-weight:700">Font</div>
<div class="t" style="left:1134.0px;top:237.0px;font-size:13px;color:#c8ccd4;letter-spacing:-0.016px">宋体</div>
<div class="t" style="left:1136.6px;top:276.9px;font-size:14px;color:#c8ccd4;letter-spacing:-0.378px">16</div>
<div class="t" style="left:1167.0px;top:421.3px;font-size:13px;color:#c8ccd4;letter-spacing:0.696px">0.00</div>
<div class="t" style="left:1307.0px;top:421.3px;font-size:13px;color:#c8ccd4;letter-spacing:-0.097px">1%</div>
<div class="t" style="left:1167.0px;top:469.3px;font-size:13px;color:#c8ccd4;letter-spacing:0.696px">0.00</div>
<div class="t" style="left:1305.3px;top:469.3px;font-size:13px;color:#c8ccd4;letter-spacing:0.596px">0.00</div>
<div class="t" style="left:1124.4px;top:535.3px;font-size:14px;color:#14171c;letter-spacing:0.284px;font-weight:700">Object</div>
<div class="t" style="left:1269.8px;top:612.5px;font-size:13px;color:#c8ccd4">0</div>
<div class="t" style="left:1044.0px;top:705.9px;font-size:14px;color:#fff;letter-spacing:0.866px">1/4</div>
<div class="t" style="left:240.8px;top:185.8px;font-size:30px;color:#00adef;letter-spacing:0.013px;font-weight:700;font-family:'Liberation Serif','Noto Serif CJK SC',serif;line-height:40px;height:40px">The Joy of Summer</div>
<div class="t" style="left:240.8px;top:235.5px;font-size:30px;color:#00adef;letter-spacing:0.274px;font-weight:700;font-family:'Liberation Serif','Noto Serif CJK SC',serif;line-height:40px;height:40px">Swimming: Diving into</div>
<div class="t" style="left:240.8px;top:285.3px;font-size:30px;color:#00adef;letter-spacing:0.721px;font-weight:700;font-family:'Liberation Serif','Noto Serif CJK SC',serif;line-height:40px;height:40px">the Pool</div>
<div class="t" style="left:241.1px;top:354.2px;font-size:16px;color:#000;letter-spacing:0.310px;font-family:'Liberation Serif','Noto Serif CJK SC',serif">As the sun climbs higher in the sky and</div>
<div class="t" style="left:241.1px;top:376.7px;font-size:16px;color:#000;letter-spacing:0.527px;font-family:'Liberation Serif','Noto Serif CJK SC',serif">temperatures soar, there's no better way to</div>
<div class="t" style="left:241.1px;top:399.1px;font-size:16px;color:#000;letter-spacing:0.327px;font-family:'Liberation Serif','Noto Serif CJK SC',serif">beat the heat than by diving into a cool,</div>
<div class="t" style="left:241.1px;top:421.5px;font-size:16px;color:#000;letter-spacing:0.381px;font-family:'Liberation Serif','Noto Serif CJK SC',serif">refreshing swimming pool. Summer</div>
<div class="t" style="left:241.1px;top:444.0px;font-size:16px;color:#000;letter-spacing:0.303px;font-family:'Liberation Serif','Noto Serif CJK SC',serif">swimming is not just a delightful way to stay</div>
<div class="t" style="left:241.1px;top:466.4px;font-size:16px;color:#000;letter-spacing:0.369px;font-family:'Liberation Serif','Noto Serif CJK SC',serif">cool; it's an activity that offers numerous</div>
<div class="t" style="left:241.1px;top:488.9px;font-size:16px;color:#000;letter-spacing:0.348px;font-family:'Liberation Serif','Noto Serif CJK SC',serif">benefits for the body and mind. From</div>
<div class="t" style="left:241.1px;top:511.3px;font-size:16px;color:#000;letter-spacing:0.332px;font-family:'Liberation Serif','Noto Serif CJK SC',serif">enhancing physical fitness to providing a</div>
<div class="t" style="left:241.1px;top:533.8px;font-size:16px;color:#000;letter-spacing:0.357px;font-family:'Liberation Serif','Noto Serif CJK SC',serif">perfect setting for social gatherings,</div>
<div class="t" style="left:241.1px;top:556.3px;font-size:16px;color:#000;letter-spacing:0.421px;font-family:'Liberation Serif','Noto Serif CJK SC',serif">swimming pools are the heart of summer fun.</div>
<div class="t" style="left:240.5px;top:598.8px;font-size:16.5px;color:#000">The Physical Benefits of Swimming</div>
<div class="t" style="left:241.1px;top:631.0px;font-size:16px;color:#000;letter-spacing:0.252px;font-family:'Liberation Serif','Noto Serif CJK SC',serif">Swimming is one of the most effective forms</div>
<div class="t" style="left:241.1px;top:653.3px;font-size:16px;color:#000;letter-spacing:0.295px;font-family:'Liberation Serif','Noto Serif CJK SC',serif">of exercise. It's a full-body workout that</div>
<div class="t" style="left:579.5px;top:160.3px;font-size:16px;color:#000;letter-spacing:0.368px;font-family:'Liberation Serif','Noto Serif CJK SC',serif">health. Regular swimming sessions can</div>
<div class="t" style="left:579.5px;top:182.7px;font-size:16px;color:#000;letter-spacing:0.432px;font-family:'Liberation Serif','Noto Serif CJK SC',serif">strengthen the heart, improve lung capacity,</div>
<div class="t" style="left:579.5px;top:586.6px;font-size:16px;color:#000;letter-spacing:0.447px;font-family:'Liberation Serif','Noto Serif CJK SC',serif">and enhance overall endurance. The</div>
<div class="t" style="left:579.5px;top:609.0px;font-size:16px;color:#000;letter-spacing:0.460px;font-family:'Liberation Serif','Noto Serif CJK SC',serif">resistance provided by the water also helps</div>
<div class="t" style="left:579.5px;top:631.4px;font-size:16px;color:#000;letter-spacing:0.422px;font-family:'Liberation Serif','Noto Serif CJK SC',serif">in building muscle strength and tone.</div>
<div class="t" style="left:579.5px;top:653.9px;font-size:16px;color:#000;letter-spacing:0.369px;font-family:'Liberation Serif','Noto Serif CJK SC',serif">Additionally, swimming burns a high number</div>
<div class="t" style="left:579.5px;top:676.3px;font-size:16px;color:#000;letter-spacing:0.254px;font-family:'Liberation Serif','Noto Serif CJK SC',serif">of calories, making it an excellent exercise for</div>
<div class="t" style="left:579.5px;top:698.8px;font-size:16px;color:#000;letter-spacing:0.535px;font-family:'Liberation Serif','Noto Serif CJK SC',serif">weight management.</div>
</body>
</html>
